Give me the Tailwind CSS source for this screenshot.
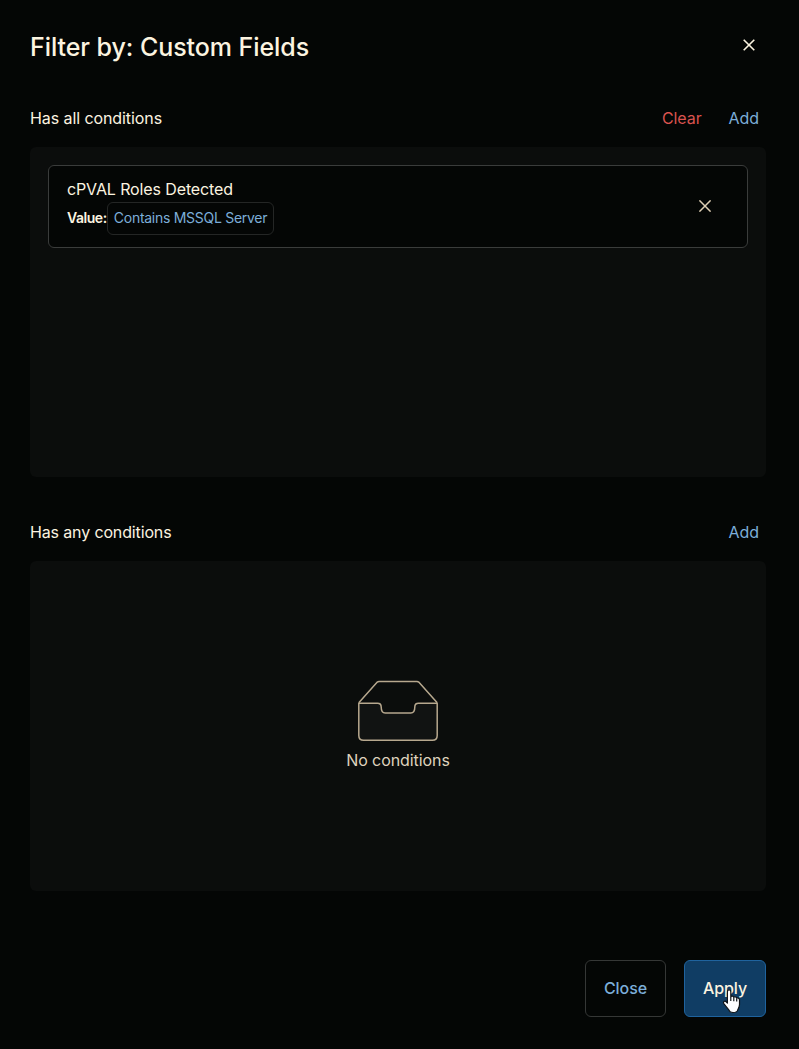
<!DOCTYPE html>
<html lang="en">
<head>
<meta charset="utf-8">
<title>Filter by: Custom Fields</title>
<script src="https://cdn.jsdelivr.net/npm/@tailwindcss/browser@4"></script>
</head>
<body class="bg-[#040605]">
<main class="flex h-[1049px] w-[799px] flex-col overflow-hidden bg-[#040605] pl-[30px] pr-[33px] font-['Inter',sans-serif] text-[16px] leading-6 tracking-[-0.08px] whitespace-nowrap text-[#fcf4e0]">
  <header class="flex h-[94px] items-start justify-between pt-[31px]">
    <h1 class="text-[25px] leading-8 font-medium tracking-[-0.06px]">Filter by: Custom Fields</h1>
    <button aria-label="Close dialog" class="mt-[8px] mr-[11px]">
      <svg class="size-3" viewBox="0 0 12 12" fill="none" stroke="#fcf4e0" stroke-width="1.6"><path d="M.7.7 11.3 11.3M11.3.7.7 11.3"/></svg>
    </button>
  </header>
  <section>
    <div class="flex h-[53px] items-start justify-between pt-[12px] pr-[7px]">
      <h2>Has all conditions</h2>
      <div class="flex gap-[27px]"><button class="text-[#d9534f]">Clear</button><button class="text-[#7caed9]">Add</button></div>
    </div>
    <div class="h-[330px] rounded-[6px] bg-[#0b0d0c] p-[18px]">
      <div class="flex h-[83px] items-start justify-between rounded-[6px] border border-[#3a3c3b] bg-[#040605] pl-[18px] pr-[36px]">
        <div class="pt-[11px]">
          <div class="tracking-[-0.12px]">cPVAL Roles Detected</div>
          <div class="mt-[1px] flex items-center text-[14px] leading-5"><span class="w-[40px] pb-[2px] font-semibold tracking-[-0.45px]">Value:</span><span class="flex h-[33px] w-[167px] items-center justify-center rounded-[6px] border border-[#242625] pb-[2px] tracking-[-0.28px] text-[#7caed9]">Contains MSSQL Server</span></div>
        </div>
        <button aria-label="Remove condition" class="mt-[34px]"><svg class="size-3" viewBox="0 0 12 12" fill="none" stroke="#dfcfb4" stroke-width="1.5"><path d="M.4.4 11.6 11.6M11.6.4.4 11.6"/></svg></button>
      </div>
    </div>
  </section>
  <section class="pt-[31px]">
    <div class="flex h-[53px] items-start justify-between pt-[12px] pr-[7px]">
      <h2 class="tracking-[-0.14px]">Has any conditions</h2>
      <button class="text-[#7caed9]">Add</button>
    </div>
    <div class="flex h-[330px] flex-col items-center rounded-[6px] bg-[#0b0d0c] pt-[119px] text-[#dfd3bd]">
      <svg class="h-[62px] w-[82px]" viewBox="0 0 82 62" fill="none" stroke="#b7a88e" stroke-width="1.5" stroke-linejoin="round">
        <path d="M1.8 22.8 20.3 2.1Q21 1.5 22 1.5H60Q61 1.5 61.7 2.1L80.2 22.8"/>
        <path fill="#111312" d="M1.8 23.3H20.5C23 23.3 24.2 24.8 24.2 27C24.2 30 25 33 28.2 33H53.8C57 33 57.8 30 57.8 27C57.8 24.8 59 23.3 61.5 23.3H80.2V55.5Q80.2 60.3 75.4 60.3H6.6Q1.8 60.3 1.8 55.5Z"/>
      </svg>
      <p class="mt-[6px]">No conditions</p>
    </div>
  </section>
  <footer class="mt-[69px] flex justify-end gap-[18px] font-medium">
    <button class="h-[57px] w-[81px] rounded-[6px] border border-[#353736] pb-[2px] text-[#7caed9]">Close</button>
    <button class="relative h-[57px] w-[82px] rounded-[6px] border border-[#1f639e] bg-[#103d64] pb-[2px]">Apply
      <svg class="absolute top-[27px] left-[37px] h-[26px] w-[20px]" viewBox="0 0 20 26" fill="#fff" stroke="#101418" stroke-width="1.2" stroke-linejoin="round"><path d="M5.4 15V3.7C5.4 1.2 8.8 1.2 8.8 3.7V8.8C9.2 7.7 11.6 7.8 11.8 9.4C12.5 8.3 14.5 8.7 14.7 10.3C15.7 9.5 17.5 10.2 17.5 11.8V16.5C17.5 19 16.2 20.6 15.7 22Q15.2 24.5 11 24.5 7.7 24.5 7 22.2L2 15.9C.4 13.6 3 12.3 4.4 14Z"/><path d="M8.8 9V13M11.8 9.8V13.3M14.7 10.8V13.6"/></svg>
    </button>
  </footer>
</main>
</body>
</html>
